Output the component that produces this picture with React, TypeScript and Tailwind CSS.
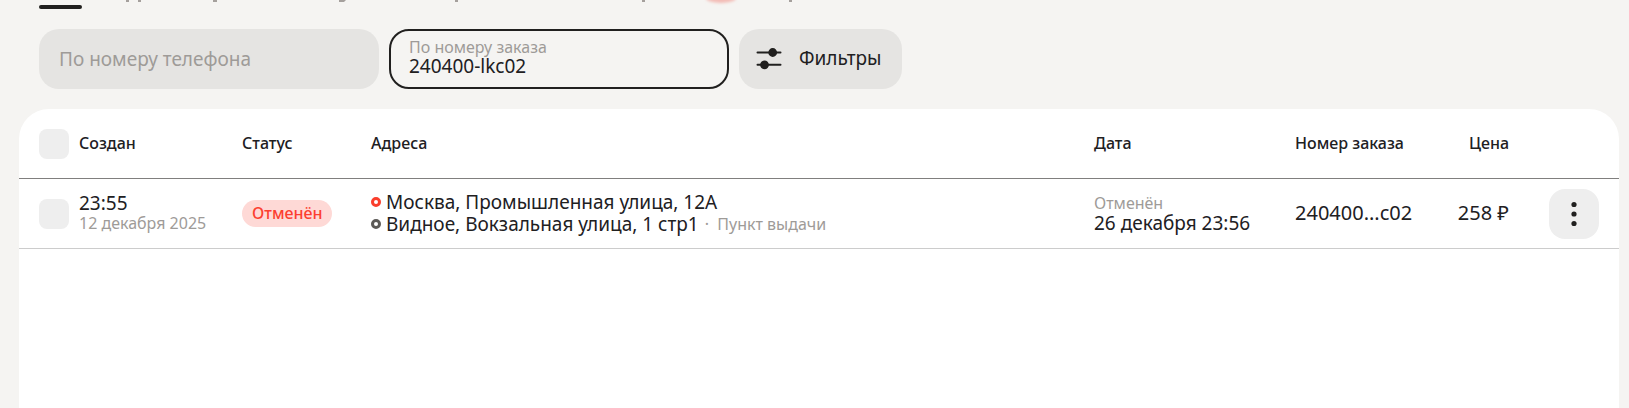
import { useState } from "react";

function FiltersIcon() {
  return (
    <svg width="26" height="22" viewBox="0 0 26 22" aria-hidden="true" className="shrink-0" fill="#21201f" stroke="#21201f" strokeWidth="2" strokeLinecap="round">
      <path d="M1.5 4.5h23M1.5 16.8h23" />
      <circle cx="16.7" cy="4.5" r="3.4" />
      <circle cx="8.5" cy="16.8" r="3.4" />
    </svg>
  );
}

function DotsIcon() {
  return (
    <svg width="6" height="26" viewBox="0 0 6 26" aria-hidden="true" fill="#21201f">
      <circle cx="3" cy="3.5" r="2.6" />
      <circle cx="3" cy="13" r="2.6" />
      <circle cx="3" cy="22.5" r="2.6" />
    </svg>
  );
}

function TabsEdge() {
  return (
    <svg width="800" height="9" viewBox="0 0 800 9" aria-hidden="true" className="block">
      <defs>
        <filter id="glow" x="-50%" y="-200%" width="200%" height="500%">
          <feGaussianBlur stdDeviation="1.6" />
        </filter>
      </defs>
      <rect y="5" width="43" height="4" rx="2" fill="#21201f" />
      <g fill="#a5a09d">
        <path d="M87 0h3v2h-3zM99 0h3v2h-3zM174 0h4v2h-4zM300 0h7l-2 2h-5zM416 0h3v2h-3zM603 0h3v2h-3zM750 0h3v2h-3z" />
      </g>
      <ellipse cx="682" cy="-2" rx="15" ry="5" fill="#f3bbb5" filter="url(#glow)" />
    </svg>
  );
}

function Check({ label }: { label: string }) {
  return (
    <input
      type="checkbox"
      aria-label={label}
      className="block size-[30px] appearance-none rounded-lg bg-[#eeeeee] checked:bg-[#21201f]"
    />
  );
}

function Address({ text, ring, note }: { text: string; ring: string; note?: string }) {
  return (
    <div className="flex items-center leading-[22px]">
      <span className={"mr-[5px] size-[10px] shrink-0 rounded-full border-3 " + ring} />
      <span>{text}</span>
      {note && <span className="ml-1.5 text-base leading-[22px] text-[#9e9b98]">·&nbsp; {note}</span>}
    </div>
  );
}

export default function App() {
  const [phone, setPhone] = useState("");
  const [order, setOrder] = useState("240400-lkc02");

  return (
    <div className="flex min-h-screen flex-col bg-[#f5f4f2] font-['Noto_Sans',sans-serif] text-[19px] text-[#21201f]">
      <div className="overflow-hidden pl-[39px]">
        <TabsEdge />
      </div>
      <form className="flex gap-[10px] px-[39px] py-5">
        <input
          type="tel"
          aria-label="По номеру телефона"
          placeholder="По номеру телефона"
          value={phone}
          onChange={(e) => setPhone(e.target.value)}
          className="h-[60px] w-[340px] rounded-[20px] bg-[#e5e4e2] px-5 outline-none placeholder:text-[#9e9b98]"
        />
        <label className="flex h-[60px] w-[340px] flex-col justify-center rounded-[20px] border-2 border-[#21201f] px-[18px] pb-1">
          <span className="text-base leading-[18px] text-[#9e9b98]">По номеру заказа</span>
          <input
            type="text"
            value={order}
            onChange={(e) => setOrder(e.target.value)}
            className="h-5 w-full bg-transparent leading-5 outline-none"
          />
        </label>
        <button type="button" className="flex h-[60px] items-center gap-[17px] rounded-[20px] bg-[#e5e4e2] pr-5 pl-[17px]">
          <FiltersIcon />
          <span className="pb-0.5">Фильтры</span>
        </button>
      </form>
      <main className="mr-[10px] ml-[19px] flex-1 overflow-hidden rounded-t-[30px] bg-white">
        <table className="w-full table-fixed border-collapse text-left whitespace-nowrap">
          <colgroup>
            <col className="w-[60px]" />
            <col className="w-[163px]" />
            <col className="w-[129px]" />
            <col />
            <col className="w-[201px]" />
            <col className="w-[124px]" />
            <col className="w-[90px]" />
            <col className="w-[110px]" />
          </colgroup>
          <thead>
            <tr className="h-[69px] border-b border-[#807f7e] text-base">
              <th className="pt-0.5 pl-5"><Check label="Выбрать все" /></th>
              <th className="font-medium">Создан</th>
              <th className="font-medium">Статус</th>
              <th className="font-medium">Адреса</th>
              <th className="font-medium">Дата</th>
              <th className="font-medium">Номер заказа</th>
              <th className="text-right font-medium">Цена</th>
              <td />
            </tr>
          </thead>
          <tbody>
            <tr className="h-[70px] border-b border-[#cccccc]">
              <td className="pt-0.5 pl-5"><Check label="Выбрать заказ" /></td>
              <td>
                <div className="leading-5">23:55</div>
                <div className="text-base leading-5 text-[#9e9b98]">12 декабря 2025</div>
              </td>
              <td>
                <span className="flex w-fit rounded-full bg-[#fed9d6] px-[10px] text-base leading-[27px] font-medium text-[#fc3f30]">Отменён</span>
              </td>
              <td>
                <Address text="Москва, Промышленная улица, 12А" ring="border-[#fa3e2c]" />
                <Address text="Видное, Вокзальная улица, 1 стр1" ring="border-[#5c5a57]" note="Пункт выдачи" />
              </td>
              <td>
                <div className="text-base leading-5 text-[#9e9b98]">Отменён</div>
                <div className="leading-5">26 декабря 23:56</div>
              </td>
              <td className="text-xl">240400...c02</td>
              <td className="text-right text-xl">258 ₽</td>
              <td className="pt-0.5 pl-10">
                <button type="button" aria-label="Действия" className="flex size-[50px] items-center justify-center rounded-2xl bg-[#eeeeee]">
                  <DotsIcon />
                </button>
              </td>
            </tr>
          </tbody>
        </table>
      </main>
    </div>
  );
}
